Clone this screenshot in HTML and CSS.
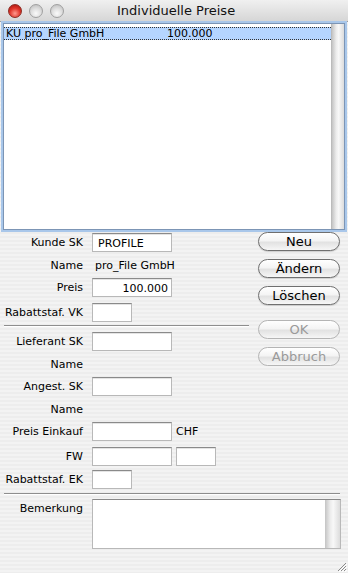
FILE: index.html
```html
<!DOCTYPE html>
<html lang="de">
<head>
  <meta charset="UTF-8">
  <title>Individuelle Preise</title>
  <link rel="stylesheet" href="styles.css">
</head>
<body>
  <div class="window">
    <div class="titlebar">
      <div class="lights">
        <span class="light red"></span>
        <span class="light"></span>
        <span class="light"></span>
      </div>
      <div class="title">Individuelle Preise</div>
    </div>

    <div class="list">
      <div class="list-body">
        <div class="list-row selected">
          <span class="col-name">KU pro_File GmbH</span>
          <span class="col-price">100.000</span>
        </div>
      </div>
      <div class="scroll"></div>
    </div>

    <div class="main">
      <div class="fields">
        <div class="row"><label>Kunde SK</label><div class="input w80">PROFILE</div></div>
        <div class="row text"><label>Name</label><span class="value">pro_File GmbH</span></div>
        <div class="row"><label>Preis</label><div class="input w80 right">100.000</div></div>
        <div class="row"><label>Rabattstaf. VK</label><div class="input w40"></div></div>
        <div class="sep"></div>
        <div class="row"><label>Lieferant SK</label><div class="input w80"></div></div>
        <div class="row text"><label>Name</label></div>
        <div class="row"><label>Angest. SK</label><div class="input w80"></div></div>
        <div class="row text"><label>Name</label></div>
        <div class="row"><label>Preis Einkauf</label><div class="input w80"></div><span class="unit">CHF</span></div>
        <div class="row tight"><label>FW</label><div class="input w80"></div><div class="input w40"></div></div>
        <div class="row"><label>Rabattstaf. EK</label><div class="input w40"></div></div>
      </div>
      <div class="buttons">
        <button class="btn">Neu</button>
        <button class="btn">Ändern</button>
        <button class="btn">Löschen</button>
        <button class="btn disabled gap">OK</button>
        <button class="btn disabled">Abbruch</button>
      </div>
    </div>

    <div class="sep full"></div>

    <div class="row notes">
      <label>Bemerkung</label>
      <div class="textarea"><div class="scroll small"></div></div>
    </div>

    <div class="grip">
      <svg width="12" height="12" viewBox="0 0 12 12">
        <path d="M11 3 L3 11 M11 6 L6 11 M11 9 L9 11" stroke="#8a8a8a" stroke-width="1"/>
        <path d="M12 4 L4 12 M12 7 L7 12 M12 10 L10 12" stroke="#fff" stroke-width="1"/>
      </svg>
    </div>
  </div>
</body>
</html>
```

FILE: styles.css
```css
* {
  box-sizing: border-box;
}

body {
  margin: 0;
  font-family: 'DejaVu Sans', 'Liberation Sans', sans-serif;
  font-size: 11px;
  color: #000;
}

.window {
  position: relative;
  width: 348px;
  height: 573px;
  background: repeating-linear-gradient(to bottom, #ededed 0, #ededed 2px, #f3f3f3 2px, #f3f3f3 4px);
  overflow: hidden;
}

/* title bar */
.titlebar {
  height: 22px;
  display: flex;
  align-items: center;
  background: linear-gradient(to bottom, #f0f0f0, #d6d6d6);
  border-bottom: 1px solid #9d9d9d;
}

.lights {
  display: flex;
  gap: 7px;
  padding-left: 8px;
  width: 111px;
}

.light {
  width: 14px;
  height: 14px;
  border-radius: 50%;
  background: radial-gradient(circle at 50% 70%, #fafafa 0, #e0e0e0 45%, #b8b8b8 100%);
  border: 1px solid #a0a0a0;
}

.light.red {
  background: radial-gradient(circle at 50% 70%, #ff9a8e 0, #e0352a 50%, #a0100a 100%);
  border-color: #8c2b22;
}

.title {
  font-size: 13px;
  flex: 1;
  padding-left: 6px;
  color: #111;
}

/* list */
.list {
  margin: 1px 3px 0 3px;
  height: 207px;
  display: flex;
  background: #fff;
  border: 1px solid #7c95b5;
  box-shadow: 0 0 0 2px #a9c7ea;
}

.list-body {
  flex: 1;
  padding-top: 3px;
}

.list-row {
  height: 13px;
  display: flex;
  align-items: center;
  line-height: 13px;
  padding-left: 2px;
}

.list-row.selected {
  background: #b5d5ff;
  border-top: 1px dotted #333;
  border-bottom: 1px dotted #333;
}

.col-name {
  width: 161px;
}

.scroll {
  width: 13px;
  background: linear-gradient(to right, #c4c4c4, #ececec 35%, #f8f8f8 55%, #dcdcdc);
  border-left: 1px solid #bbb;
}

/* form */
.main {
  display: flex;
  padding-top: 3px;
}

.fields {
  width: 250px;
}

.row {
  display: flex;
  align-items: center;
  height: 19px;
  margin-bottom: 6px;
}

.row.text {
  height: 14px;
}

.row.tight {
  margin-bottom: 4px;
}

.row label {
  width: 84px;
  text-align: right;
  padding-right: 1px;
  margin-right: 8px;
  flex: none;
}

.value {
  padding-left: 3px;
}

.input {
  height: 19px;
  background: #fff;
  border: 1px solid #b8b8b8;
  border-top-color: #8a8a8a;
  box-shadow: inset 0 1px 0 #e4e4e4;
  padding: 2px 3px 0 5px;
  line-height: 15px;
  margin-right: 4px;
}

.w80 {
  width: 80px;
}

.w40 {
  width: 40px;
}

.right {
  text-align: right;
}

.sep {
  height: 2px;
  border-top: 1px solid #8e8e8e;
  border-bottom: 1px solid #fff;
  margin: -3px 0 5px 4px;
  width: 245px;
}

.sep.full {
  width: 336px;
  margin: -2px 0 4px 4px;
}

/* buttons */
.buttons {
  display: flex;
  flex-direction: column;
  gap: 8px;
  padding-left: 8px;
  margin-top: -1px;
}

.btn {
  width: 82px;
  height: 19px;
  font-family: 'DejaVu Sans', 'Liberation Sans', sans-serif;
  font-size: 13px;
  line-height: 15px;
  padding: 0;
  color: #000;
  border: 1px solid #6f6f6f;
  border-radius: 10px;
  background: linear-gradient(to bottom, #ffffff 0, #f4f4f4 45%, #e2e2e2 55%, #f6f6f6 100%);
  box-shadow: 0 1px 1px rgba(0, 0, 0, 0.15);
}

.btn.disabled {
  color: #9a9a9a;
  border-color: #b4b4b4;
  box-shadow: none;
}

.btn.gap {
  margin-top: 7px;
}

/* notes */
.notes {
  height: 50px;
  align-items: flex-start;
}

.notes label {
  padding-top: 3px;
}

.textarea {
  width: 249px;
  height: 50px;
  background: #fff;
  border: 1px solid #b8b8b8;
  border-top-color: #8a8a8a;
  display: flex;
  justify-content: flex-end;
}

.scroll.small {
  width: 15px;
  border-left: none;
}

.grip {
  position: absolute;
  right: 1px;
  bottom: 1px;
  width: 12px;
  height: 12px;
}
```
